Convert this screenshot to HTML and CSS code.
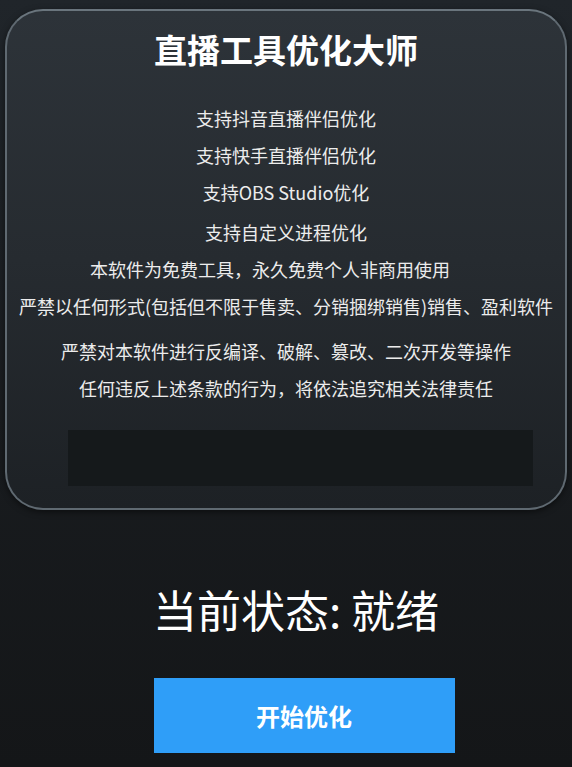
FILE: index.html
```html
<!DOCTYPE html>
<html lang="zh-CN">
<head>
<meta charset="utf-8">
<title>直播工具优化大师</title>
<link rel="stylesheet" href="styles.css">
</head>
<body>
<main class="app">
  <section class="card">
    <h1 class="title">直播工具优化大师</h1>
    <div class="lines">
      <p class="line">支持抖音直播伴侣优化</p>
      <p class="line">支持快手直播伴侣优化</p>
      <p class="line">支持OBS Studio优化</p>
      <p class="line line-gap-lg">支持自定义进程优化</p>
      <p class="line line-shift-left">本软件为免费工具，永久免费个人非商用使用</p>
      <p class="line">严禁以任何形式(包括但不限于售卖、分销捆绑销售)销售、盈利软件</p>
      <p class="line line-gap-xl">严禁对本软件进行反编译、破解、篡改、二次开发等操作</p>
      <p class="line">任何违反上述条款的行为，将依法追究相关法律责任</p>
    </div>
    <div class="log-box"></div>
  </section>
  <div class="status">当前状态: 就绪</div>
  <button class="start-btn" type="button">开始优化</button>
</main>
</body>
</html>
```
FILE: styles.css
```css
* { box-sizing: border-box; }
html, body { margin: 0; padding: 0; }
body {
  width: 572px;
  height: 767px;
  overflow: hidden;
  background: linear-gradient(180deg, #20252a 0%, #181b1e 60%, #141618 100%);
  font-family: "Noto Sans CJK SC", "Noto Sans", sans-serif;
  color: #ececec;
}
.app {
  display: flex;
  flex-direction: column;
  align-items: center;
  padding-top: 9px;
}
.card {
  width: 562px;
  height: 501px;
  border: 2px solid #5f6971;
  border-top-color: #6a757d;
  border-radius: 38px;
  background: linear-gradient(180deg, #2d3339 0%, #262b30 50%, #1d2125 100%);
  box-shadow: 0 2px 6px rgba(0,0,0,0.5);
  padding: 17px 0 21px;
  display: flex;
  flex-direction: column;
  align-items: center;
}
.title {
  margin: 0;
  font-size: 33px;
  line-height: 42px;
  font-weight: 700;
  color: #ffffff;
}
.lines {
  margin-top: 36px;
  display: flex;
  flex-direction: column;
  align-items: center;
  gap: 13px;
}
.line {
  margin: 0;
  font-size: 18px;
  line-height: 24px;
  color: #ececec;
  white-space: nowrap;
}
.line-gap-lg { margin-top: 3px; }
.line-gap-xl { margin-top: 8px; }
.line-shift-left { margin-right: 32px; }
.log-box {
  align-self: flex-start;
  margin-top: 30px;
  margin-left: 61px;
  width: 465px;
  height: 56px;
  background: #15191b;
}
.status {
  margin-top: 71px;
  margin-left: 20px;
  font-size: 44px;
  line-height: 56px;
  color: #ffffff;
}
.start-btn {
  margin-top: 41px;
  margin-left: 36px;
  width: 301px;
  height: 75px;
  border: none;
  background: #2f9ef8;
  color: #ffffff;
  font-family: "Noto Sans CJK SC", "Noto Sans", sans-serif;
  font-size: 24px;
  font-weight: 700;
}
```
